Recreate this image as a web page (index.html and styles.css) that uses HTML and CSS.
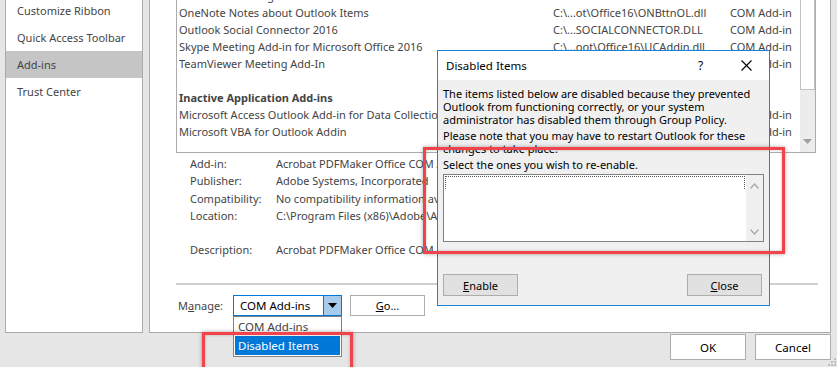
FILE: index.html
```html
<!DOCTYPE html>
<html>
<head>
<meta charset="utf-8">
<link rel="stylesheet" href="styles.css">
</head>
<body>
<div class="app">
  <div class="panels">
    <nav class="sidebar">
      <div class="nav-item">Customize Ribbon</div>
      <div class="nav-item">Quick Access Toolbar</div>
      <div class="nav-item active">Add-ins</div>
      <div class="nav-item">Trust Center</div>
    </nav>
    <main class="main">
      <div class="addin-list">
        <div class="rows">
          <div class="row"><span>Microsoft Exchange Add-in</span><span>C:\...ADDINS\UmOutlookAddin.dll</span><span>COM Add-in</span></div>
          <div class="row"><span>OneNote Notes about Outlook Items</span><span>C:\...ot\Office16\ONBttnOL.dll</span><span>COM Add-in</span></div>
          <div class="row"><span>Outlook Social Connector 2016</span><span>C:\...SOCIALCONNECTOR.DLL</span><span>COM Add-in</span></div>
          <div class="row"><span>Skype Meeting Add-in for Microsoft Office 2016</span><span>C:\...oot\Office16\UCAddin.dll</span><span>COM Add-in</span></div>
          <div class="row"><span>TeamViewer Meeting Add-In</span><span>C:\...eamViewer\MeetingAddin.dll</span><span>COM Add-in</span></div>
          <div class="row"></div>
          <div class="row heading"><span>Inactive Application Add-ins</span></div>
          <div class="row"><span>Microsoft Access Outlook Add-in for Data Collection and Publishing</span><span>C:\...ADDINS\ACCOLK.DLL</span><span>COM Add-in</span></div>
          <div class="row"><span>Microsoft VBA for Outlook Addin</span><span>C:\...ADDINS\OUTLVBA.DLL</span><span>COM Add-in</span></div>
        </div>
        <div class="vscroll">
          <div class="thumb"></div>
          <div class="track">
            <svg class="arrow" width="9" height="5" viewBox="0 0 9 5"><path d="M0 0H9L4.5 5Z" fill="#a0a0a0"/></svg>
          </div>
        </div>
      </div>

      <div class="details">
        <span>Add-in:</span><span>Acrobat PDFMaker Office COM Addin</span>
        <span>Publisher:</span><span>Adobe Systems, Incorporated</span>
        <span>Compatibility:</span><span>No compatibility information available</span>
        <span>Location:</span><span>C:\Program Files (x86)\Adobe\Acrobat DC\PDFMaker\Office\PDFMOfficeAddin.dll</span>
        <span></span><span></span>
        <span>Description:</span><span>Acrobat PDFMaker Office COM Addin</span>
      </div>

      <div class="separator"></div>

      <div class="manage">
        <span class="manage-label">M<u>a</u>nage:</span>
        <div class="combo">
          <span class="combo-text">COM Add-ins</span>
          <span class="combo-btn"><svg width="9" height="5" viewBox="0 0 9 5"><path d="M0 0H9L4.5 5Z" fill="#000"/></svg></span>
        </div>
        <button class="btn go"><u>G</u>o...</button>
      </div>
    </main>
  </div>

  <div class="footer">
    <button class="btn footer-btn">OK</button>
    <button class="btn footer-btn">Cancel</button>
  </div>

  <svg class="grip" width="8" height="8" viewBox="0 0 8 8">
    <rect x="6" y="0" width="2" height="2" fill="#bcbcbc"/>
    <rect x="3" y="3" width="2" height="2" fill="#bcbcbc"/>
    <rect x="6" y="3" width="2" height="2" fill="#bcbcbc"/>
    <rect x="0" y="6" width="2" height="2" fill="#bcbcbc"/>
    <rect x="3" y="6" width="2" height="2" fill="#bcbcbc"/>
    <rect x="6" y="6" width="2" height="2" fill="#bcbcbc"/>
  </svg>

  <div class="dropdown">
    <div class="dd-item">COM Add-ins</div>
    <div class="dd-item selected">Disabled Items</div>
  </div>

  <div class="dialog">
    <div class="dlg-title">
      <span class="dlg-caption">Disabled Items</span>
      <span class="dlg-help">?</span>
      <svg class="dlg-close" width="11" height="11" viewBox="0 0 11 11"><path d="M0.5 0.5L10.5 10.5M10.5 0.5L0.5 10.5" stroke="#000" stroke-width="1.1"/></svg>
    </div>
    <div class="dlg-body">
      <p class="dlg-text">The items listed below are disabled because they prevented Outlook from functioning correctly, or your system administrator has disabled them through Group Policy.</p>
      <p class="dlg-text">Please note that you may have to restart Outlook for these changes to take place.</p>
      <p class="dlg-text">Select the ones you wish to re-enable.</p>
      <div class="dlg-list">
        <div class="dlg-list-area"><div class="focus-rect"></div></div>
        <div class="dlg-scroll">
          <svg width="9" height="6" viewBox="0 0 9 6"><path d="M0.5 5.5L4.5 1L8.5 5.5" fill="none" stroke="#a6a6a6" stroke-width="1.2"/></svg>
          <svg width="9" height="6" viewBox="0 0 9 6"><path d="M0.5 0.5L4.5 5L8.5 0.5" fill="none" stroke="#a6a6a6" stroke-width="1.2"/></svg>
        </div>
      </div>
      <div class="dlg-buttons">
        <button class="btn dlg-btn"><u>E</u>nable</button>
        <button class="btn dlg-btn"><u>C</u>lose</button>
      </div>
    </div>
  </div>

  <div class="highlight hl-dialog"></div>
  <div class="highlight hl-dropdown"></div>
</div>
</body>
</html>
```

FILE: styles.css
```css
* { box-sizing: border-box; }
html, body { margin: 0; padding: 0; }
body {
  width: 837px;
  height: 367px;
  overflow: hidden;
  background: #e6e6e6;
  font-family: "Noto Sans", "Open Sans", sans-serif;
  font-size: 11px;
  color: #444;
}
.app {
  position: relative;
  width: 837px;
  height: 367px;
  overflow: hidden;
}
.panels {
  display: flex;
  gap: 6px;
  padding-left: 5px;
  height: 333px;
}
.sidebar {
  width: 138px;
  height: 334px;
  margin-top: -1px;
  background: #fff;
  border: 1px solid #ababab;
  padding-top: 0;
}
.nav-item {
  height: 27px;
  line-height: 27px;
  padding-left: 11px;
  white-space: nowrap;
}
.nav-item:first-child { margin-top: -3px; }
.nav-item.active { background: #c5c5c5; }

.main {
  width: 682px;
  height: 334px;
  margin-top: -1px;
  background: #fff;
  border: 1px solid #ababab;
  padding: 0 14px 0 26px;
  display: flex;
  flex-direction: column;
}
.addin-list {
  margin-top: -14px;
  height: 167px;
  border: 1px solid #ababab;
  display: flex;
}
.rows {
  flex: 1;
  min-width: 0;
  overflow: hidden;
}
.row {
  display: grid;
  grid-template-columns: 374px 177px 1fr;
  height: 17px;
  line-height: 17px;
  padding-left: 2px;
  white-space: nowrap;
}
.row span { overflow: hidden; }
.row.heading { font-weight: bold; }
.vscroll {
  width: 15px;
  display: flex;
  flex-direction: column;
  background: #fff;
}
.thumb {
  height: 103px;
  border: 1px solid #c2c2c2;
  border-top: none;
  background: #fff;
}
.track {
  flex: 1;
  background: #ececec;
  display: flex;
  align-items: flex-end;
  justify-content: center;
  padding-bottom: 8px;
}
.arrow { display: block; }

.details {
  display: grid;
  grid-template-columns: 86px 1fr;
  margin-top: 2px;
  padding-left: 14px;
  line-height: 17.3px;
  white-space: nowrap;
}
.details span { overflow: hidden; height: 17.3px; }

.separator {
  margin-top: 24px;
  height: 2px;
  background: #cfcfcf;
  margin-right: -2px;
}
.manage {
  margin-top: 10px;
  display: flex;
  align-items: center;
  height: 21px;
}
.manage-label {
  width: 57px;
  padding-left: 2px;
}
.combo {
  width: 109px;
  height: 21px;
  border: 1px solid #0078d7;
  display: flex;
  background: #fff;
}
.combo-text {
  flex: 1;
  padding-left: 6px;
  line-height: 19px;
  color: #000;
  font-size: 11.5px;
}
.combo-btn {
  width: 18px;
  background: #a8cbec;
  border-left: 1px solid #0078d7;
  display: flex;
  align-items: center;
  justify-content: center;
}
.btn {
  font-family: inherit;
  font-size: 11px;
  color: #000;
  padding: 0;
  margin: 0;
  border: 1px solid #adadad;
  background: #fff;
}
.go {
  margin-left: 8px;
  width: 75px;
  height: 21px;
}
.footer {
  display: flex;
  justify-content: flex-end;
  gap: 9px;
  padding-right: 6px;
  margin-top: 1px;
}
.footer-btn {
  width: 76px;
  height: 26px;
  font-size: 11.5px;
}
.grip {
  position: absolute;
  right: 1px;
  bottom: 1px;
}

.dropdown {
  position: absolute;
  left: 233px;
  top: 316px;
  width: 109px;
  height: 41px;
  background: #fff;
  border: 1px solid #828282;
  padding: 0 1px;
}
.dd-item {
  height: 19px;
  line-height: 19px;
  padding-left: 3px;
  font-size: 11.5px;
  color: #444;
}
.dd-item.selected {
  background: #0078d7;
  color: #fff;
}

.dialog {
  position: absolute;
  left: 437px;
  top: 50px;
  width: 333px;
  height: 256px;
  border: 1px solid #1883d7;
  background: #f0f0f0;
  display: flex;
  flex-direction: column;
  color: #000;
}
.dlg-title {
  height: 29px;
  background: #fff;
  display: flex;
  align-items: center;
  padding-left: 8px;
}
.dlg-caption { flex: 1; font-size: 11.5px; }
.dlg-help { width: 20px; font-size: 12px; }
.dlg-close { margin-right: 17px; margin-left: 23px; }
.dlg-body {
  padding: 7px 6px 0 5px;
  display: flex;
  flex-direction: column;
}
.dlg-text {
  margin: 0 0 3px 0;
  line-height: 13px;
}
.dlg-list {
  margin-top: 0;
  width: 321px;
  height: 68px;
  border: 1px solid #828282;
  background: #fff;
  display: flex;
}
.dlg-list-area { flex: 1; padding: 1px 1px 0 1px; }
.focus-rect {
  height: 13px;
  border: 1px dotted #555;
  border-bottom: none;
}
.dlg-scroll {
  width: 17px;
  background: #f0f0f0;
  display: flex;
  flex-direction: column;
  justify-content: space-between;
  align-items: center;
  padding: 8px 0 6px;
}
.dlg-scroll svg { display: block; }
.dlg-buttons {
  margin-top: 32px;
  display: flex;
  justify-content: space-between;
  padding-right: 1px;
}
.dlg-btn {
  width: 75px;
  height: 22px;
  background: #e1e1e1;
  border-color: #adadad;
}

.highlight {
  position: absolute;
  border: 3px solid #f2434b;
  box-shadow: 0 0 4px rgba(0,0,0,0.35), inset 0 0 3px rgba(0,0,0,0.25);
}
.hl-dialog {
  left: 423px;
  top: 147px;
  width: 362px;
  height: 107px;
}
.hl-dropdown {
  left: 202px;
  top: 332px;
  width: 151px;
  height: 45px;
}
```
